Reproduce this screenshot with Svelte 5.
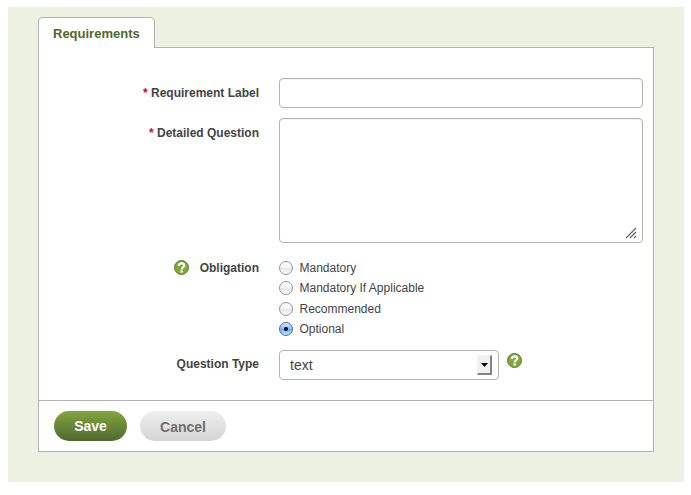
<script>
  let label = $state('');
  let question = $state('');
  let obligation = $state('Optional');
  const options = ['Mandatory', 'Mandatory If Applicable', 'Recommended', 'Optional'];
</script>

{#snippet help()}
  <svg class="help" width="16" height="16" viewBox="0 0 16 16" role="img" aria-label="Help">
    <circle cx="7.500" cy="7.500" r="7" fill="#84a83c" stroke="#587a38" stroke-width="1" />
    <path d="M4.900 5.900C4.900 4 6 3.400 7.600 3.400s2.600.8 2.600 2.200C10.200 7.300 7.700 7.300 7.700 9.500" fill="none" stroke="#fff" stroke-width="2.100" />
    <rect x="6.500" y="10.400" width="2.300" height="2.200" fill="#fff" />
  </svg>
{/snippet}

<main class="page">
  <div class="tab">Requirements</div>
  <form class="panel" onsubmit={(e) => e.preventDefault()}>
    <div class="fields">
      <div class="row first">
        <label class="name" for="label"><span class="star">*</span> Requirement Label</label>
        <input id="label" class="box" type="text" bind:value={label} />
      </div>
      <div class="row second">
        <label class="name" for="question"><span class="star">*</span> Detailed Question</label>
        <div class="area">
          <textarea id="question" class="box" bind:value={question}></textarea>
          <svg class="grip" width="12" height="12" viewBox="0 0 12 12" aria-hidden="true">
            <path d="M1 11L11 1M5 11L11 5M9 11L11 9" stroke="#666" stroke-width="1.200" fill="none" />
          </svg>
        </div>
      </div>
      <div class="row third">
        <div class="name with-help">{@render help()}<span>Obligation</span></div>
        <div class="radios">
          {#each options as option}
            <label class="option"><input type="radio" name="obligation" value={option} bind:group={obligation} />{option}</label>
          {/each}
        </div>
      </div>
      <div class="row fourth">
        <div class="name">Question Type</div>
        <button type="button" class="box select"><span>text</span><span class="arrow"><svg width="7" height="4" viewBox="0 0 7 4"><path d="M0 0H7L3.500 4Z" fill="#000" /></svg></span></button>
        {@render help()}
      </div>
    </div>
    <div class="footer">
      <button class="pill save">Save</button>
      <button type="button" class="pill cancel">Cancel</button>
    </div>
  </form>
</main>

<style>
  :global(body) {
    background: #fff;
  }
  .page,
  .page * {
    box-sizing: border-box;
  }
  .page {
    width: 676px;
    height: 475px;
    margin: 7px 0 0 8px;
    padding: 10px 30px 0;
    background: #edf1e1;
    color: #444;
    font: 12px/16px "Liberation Sans", Arial, sans-serif;
    display: flow-root;
  }
  .tab {
    position: relative;
    width: 117px;
    height: 31px;
    padding: 8px 0 0 14px;
    border: 1px solid #b3b3b3;
    border-bottom: 0;
    border-radius: 5px 5px 0 0;
    background: #fff;
    color: #4f682b;
    font-size: 13px;
    font-weight: bold;
  }
  .panel {
    display: flex;
    flex-direction: column;
    width: 616px;
    height: 405px;
    margin: -1px 0 0;
    border: 1px solid #b3b3b3;
    background: #fff;
  }
  .fields {
    flex: 1;
    padding-top: 30px;
  }
  .row {
    display: flex;
    align-items: flex-start;
  }
  .name {
    width: 220px;
    margin-right: 20px;
    padding-top: 7px;
    text-align: right;
    font-weight: bold;
    white-space: nowrap;
  }
  .star {
    color: #d5004b;
  }
  .box {
    display: block;
    margin: 0;
    border: 1px solid #b3b3b3;
    border-radius: 4px;
    background: #fff;
    color: #444;
    font: 14px/18px "Liberation Sans", Arial, sans-serif;
    outline: none;
  }
  .first {
    height: 40px;
  }
  .first .box {
    width: 364px;
    height: 30px;
    padding: 0 10px;
    box-shadow: inset 0 1px 1px #f2f2f2;
  }
  .second {
    height: 142px;
  }
  .area {
    position: relative;
  }
  .area .box {
    width: 364px;
    height: 125px;
    padding: 6px 10px;
    resize: none;
    box-shadow: inset 0 1px 1px #f2f2f2;
  }
  .grip {
    position: absolute;
    right: 6px;
    bottom: 4px;
  }
  .third {
    height: 90px;
  }
  .third .name {
    padding-top: 0;
  }
  .with-help {
    display: flex;
    justify-content: flex-end;
    gap: 10px;
  }
  .help {
    display: block;
    flex: none;
  }
  .radios {
    display: grid;
    grid-template-rows: 20px 21px 20px 20px;
  }
  .option {
    display: flex;
    align-items: flex-start;
    gap: 6.500px;
    height: 16px;
  }
  .option input {
    appearance: none;
    width: 14px;
    height: 14px;
    margin: 1px 0 0;
    border: 1px solid #949494;
    border-radius: 50%;
    background: linear-gradient(#fff, #f4f4f4 45%, #e8e8e8 55%, #fafafa);
  }
  .option input:checked {
    border-color: #5663a8;
    background:
      radial-gradient(circle at 50% 50%, #07142b 0 1.700px, transparent 2.400px),
      linear-gradient(#d5e7fb, #8fc2f3 45%, #72b3ef 55%, #b9e8ff);
  }
  .select {
    display: flex;
    justify-content: space-between;
    align-items: center;
    width: 220px;
    height: 30px;
    padding: 0 6px 0 10px;
    margin-right: 8px;
  }
  .arrow {
    display: flex;
    align-items: center;
    justify-content: center;
    width: 15px;
    height: 20px;
    border: solid;
    border-width: 1px 2px 2px 1px;
    border-color: #f2f2f2 #858585 #858585 #f2f2f2;
    background: #f1f1f1;
  }
  .fourth .name {
    padding-top: 6px;
  }
  .fourth .help {
    margin-top: 3px;
  }
  .footer {
    display: flex;
    align-items: flex-start;
    gap: 13px;
    height: 51px;
    padding: 10px 15px;
    border-top: 1px solid #b3b3b3;
  }
  .pill {
    height: 30px;
    padding: 0;
    border: 0;
    border-radius: 15px;
    font: bold 14px/30px "Liberation Sans", Arial, sans-serif;
  }
  .save {
    width: 73px;
    background: linear-gradient(#84a53f, #4e692f);
    color: #fff;
  }
  .cancel {
    width: 86px;
    padding-top: 2px;
    line-height: 28px;
    background: linear-gradient(#efefef, #d4d4d4);
    color: #707070;
  }
</style>
